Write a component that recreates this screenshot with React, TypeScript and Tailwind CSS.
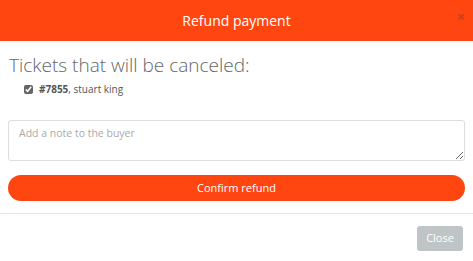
import React from "react";

function App() {
  return (
    <div className="w-[473px] h-[261px] bg-white font-['Open_Sans',sans-serif] overflow-hidden">
      <div className="h-[41px] bg-[#ff4611] flex items-center justify-center relative">
        <h2 className="text-white text-[14px] font-medium leading-none">Refund payment</h2>
        <span className="absolute right-[8px] top-[10px] text-[#c8401a] text-[14px] font-bold leading-none">×</span>
      </div>
      <div className="px-[8px] pt-[11px]">
        <h3 className="text-[#666] text-[19px] font-light leading-[26px] ml-[1px]">Tickets that will be canceled:</h3>
        <label className="flex items-center mt-[4px] ml-[16px] text-[10px] text-[#555]">
          <input type="checkbox" defaultChecked className="w-[9px] h-[9px] mr-[6px] accent-[#666]" />
          <span>
            <b>#7855</b>, stuart king
          </span>
        </label>
        <textarea
          placeholder="Add a note to the buyer"
          className="block w-full h-[41px] mt-[23px] border border-[#ddd] rounded-[3px] px-[10px] py-[5px] text-[10.5px] text-[#555] placeholder:text-[#aaa] outline-none"
        />
        <button className="block w-full h-[26px] mt-[14px] rounded-full bg-[#ff4611] text-white text-[11px]">
          Confirm refund
        </button>
      </div>
      <div className="mt-[12px] border-t border-[#e5e5e5] flex justify-end pr-[10px] pt-[12px]">
        <button className="h-[25px] w-[46px] rounded-[3px] bg-[#bfc4c7] text-white text-[11px]">Close</button>
      </div>
    </div>
  );
}

export default App;
